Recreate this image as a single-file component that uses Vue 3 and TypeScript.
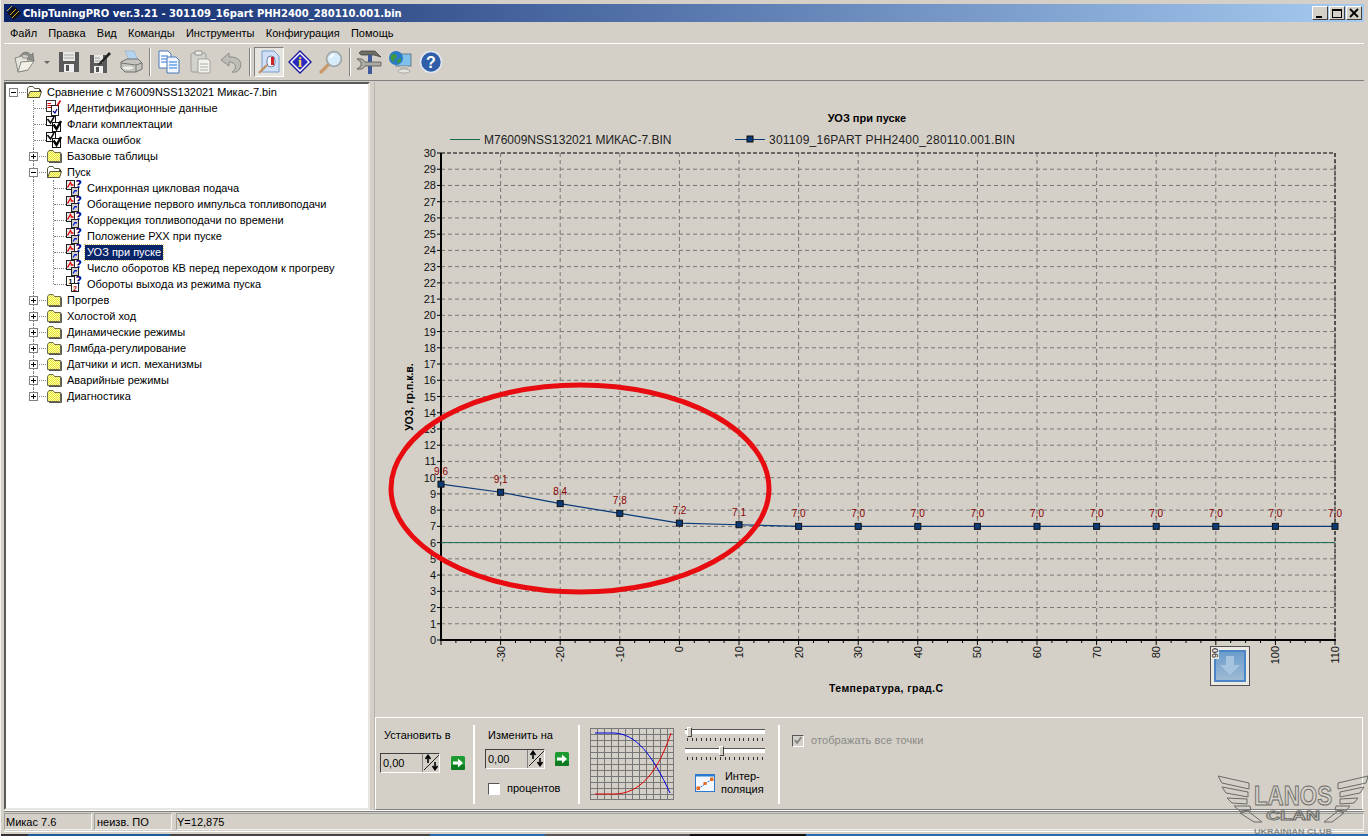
<script setup lang="ts">
interface TreeRow {
  label: string
  level: number
  icon: string
  expander?: '+' | '-'
  last?: boolean
  selected?: boolean
}

const menus = ['Файл', 'Правка', 'Вид', 'Команды', 'Инструменты', 'Конфигурация', 'Помощь']

const tools = ['open', 'caret', 'save', 'saveas', 'print', '|', 'copy', 'paste', 'undo', '|', 'compare', 'info', 'find', '|', 'tools', 'network', 'help']

const tree: TreeRow[] = [
  { label: 'Сравнение с M76009NSS132021 Микас-7.bin', level: 0, icon: 'folder-open', expander: '-' },
  { label: 'Идентификационные данные', level: 1, icon: 'doc' },
  { label: 'Флаги комплектации', level: 1, icon: 'check' },
  { label: 'Маска ошибок', level: 1, icon: 'check' },
  { label: 'Базовые таблицы', level: 1, icon: 'folder', expander: '+' },
  { label: 'Пуск', level: 1, icon: 'folder-open', expander: '-' },
  { label: 'Синхронная цикловая подача', level: 2, icon: 'chart' },
  { label: 'Обогащение первого импульса топливоподачи', level: 2, icon: 'chart' },
  { label: 'Коррекция топливоподачи по времени', level: 2, icon: 'chart' },
  { label: 'Положение РХХ при пуске', level: 2, icon: 'chart' },
  { label: 'УОЗ при пуске', level: 2, icon: 'chart', selected: true },
  { label: 'Число оборотов КВ перед переходом к прогреву', level: 2, icon: 'chart' },
  { label: 'Обороты выхода из режима пуска', level: 2, icon: 'num', last: true },
  { label: 'Прогрев', level: 1, icon: 'folder', expander: '+' },
  { label: 'Холостой ход', level: 1, icon: 'folder', expander: '+' },
  { label: 'Динамические режимы', level: 1, icon: 'folder', expander: '+' },
  { label: 'Лямбда-регулирование', level: 1, icon: 'folder', expander: '+' },
  { label: 'Датчики и исп. механизмы', level: 1, icon: 'folder', expander: '+' },
  { label: 'Аварийные режимы', level: 1, icon: 'folder', expander: '+' },
  { label: 'Диагностика', level: 1, icon: 'folder', expander: '+', last: true },
]

// chart is drawn in page coordinates, the svg viewBox starts at the panel corner
const left = 441
const right = 1335
const top = 153
const bottom = 640
const xAt = (t: number) => left + ((t + 40) / 150) * (right - left)
const yAt = (v: number) => bottom - (v / 30) * (bottom - top)

const yValues = Array.from({ length: 31 }, (_, i) => i)
const xValues = Array.from({ length: 15 }, (_, i) => -30 + i * 10)
const minorTicks = Array.from({ length: 61 }, (_, i) => left + (i * (right - left)) / 60)

const values = [9.6, 9.1, 8.4, 7.8, 7.2, 7.1, 7, 7, 7, 7, 7, 7, 7, 7, 7, 7]
const points = values.map((v, i) => ({
  x: xAt(-40 + i * 10),
  y: yAt(v),
  text: v.toFixed(1).replace('.', ','),
}))
const polyline = points.map((p) => `${p.x},${p.y}`).join(' ')

const gridCols = Array.from({ length: 11 }, (_, i) => i)
const gridRows = Array.from({ length: 11 }, (_, i) => i)
const sliderTicks = Array.from({ length: 17 }, (_, i) => i)
</script>

<template>
  <div class="window">
    <svg class="defs" width="0" height="0">
      <defs>
        <pattern id="dither" width="2" height="2" patternUnits="userSpaceOnUse">
          <rect width="2" height="2" fill="#ffff9c" />
          <rect width="1" height="1" fill="#e8e040" />
          <rect x="1" y="1" width="1" height="1" fill="#e8e040" />
        </pattern>
        <symbol id="folder" viewBox="0 0 16 16">
          <path d="M1.5 4.5 L3 2.5 H7 L8.5 4.5 H14.5 V13.5 H1.5 Z" fill="url(#dither)" stroke="#6b6b50" />
          <path d="M15.5 5.5 V14.5 H3" fill="none" stroke="#555" />
        </symbol>
        <symbol id="folder-open" viewBox="0 0 16 16">
          <path d="M1.5 4.5 L3 2.5 H7 L8.5 4.5 H13.5 V13.5 H1.5 Z" fill="#fff" stroke="#55553c" />
          <path d="M1.5 13.5 L4 7.5 H15.5 L13.5 13.5 Z" fill="url(#dither)" stroke="#55553c" />
          <path d="M14.5 5.5 V8" stroke="#222" />
        </symbol>
        <symbol id="doc" viewBox="0 0 16 16">
          <rect x="0.5" y="0.5" width="9" height="11" fill="#fff" stroke="#333" />
          <path d="M1.5 3.5 H5 M1.5 5.5 H5 M1.5 7.5 H5" stroke="#e00000" stroke-width="1.2" />
          <rect x="5.5" y="5.5" width="7" height="10" fill="#fff" stroke="#222" />
          <path d="M7 11 L9 13 L11 9" fill="none" stroke="#000090" stroke-width="1.2" />
          <path d="M11 6 L14.5 0.5" stroke="#c00000" stroke-width="1.5" />
        </symbol>
        <symbol id="check" viewBox="0 0 16 16">
          <rect x="0.5" y="0.5" width="9" height="9" fill="#fff" stroke="#111" />
          <rect x="6.5" y="6.5" width="8" height="9" fill="#fff" stroke="#111" />
          <path d="M1.5 3 L4.5 7 L8 1" fill="none" stroke="#111" stroke-width="1.6" />
          <path d="M7.5 8.5 L10.5 13 L15 5" fill="none" stroke="#000" stroke-width="2.4" />
        </symbol>
        <symbol id="chart" viewBox="0 0 16 16">
          <rect x="0.5" y="0.5" width="8" height="9" fill="#e8e8e8" stroke="#222" />
          <path d="M1.5 7.5 L4.5 2.5 L5.5 5 L7.5 5" fill="none" stroke="#e00000" stroke-width="1.3" />
          <rect x="5.5" y="7.5" width="7" height="8" fill="#d4d0c8" stroke="#222" />
          <path d="M7 13.5 L9 10.5 L11 11" fill="none" stroke="#0020d0" stroke-width="1.3" />
          <text x="9.6" y="8" class="svg-q">?</text>
        </symbol>
        <symbol id="num" viewBox="0 0 16 16">
          <rect x="0.5" y="0.5" width="8" height="9" fill="#fff" stroke="#222" />
          <text x="2.5" y="8" class="svg-num">1</text>
          <rect x="5.5" y="7.5" width="7" height="8" fill="#fff" stroke="#222" />
          <text x="7" y="15" class="svg-num svg-red">2</text>
          <text x="9.6" y="8" class="svg-q">?</text>
        </symbol>

        <symbol id="open" viewBox="0 0 24 24">
          <path d="M2 8 L9 6 L10 8 L15 8 V20 L5 22 Z" fill="#e4e2da" stroke="#8a8a82" />
          <path d="M5 22 L8 12 L21 11 L15 20 Z" fill="#f2f0e6" stroke="#8a8a82" />
          <path d="M7 6 C10 1 15 1 18 5 L20 3 L21 11 L14 9 L16 7 C14 4 11 4 7 6 Z" fill="#8c908a" stroke="#666" stroke-width="0.6" />
        </symbol>
        <symbol id="caret" viewBox="0 0 12 24">
          <path d="M3 11 H9 L6 14 Z" fill="#666" />
        </symbol>
        <symbol id="save" viewBox="0 0 24 24">
          <path d="M2 2 H22 V22 H2 Z" fill="#5a5a5a" />
          <rect x="6" y="2" width="12" height="9" fill="#e8e8e4" />
          <path d="M7 5 H17 M7 8 H17" stroke="#aaa" />
          <rect x="7" y="14" width="10" height="8" fill="#efefef" />
          <rect x="9" y="15" width="3" height="6" fill="#555" />
        </symbol>
        <symbol id="saveas" viewBox="0 0 24 24">
          <path d="M2 5 H19 V23 H2 Z" fill="#5a5a5a" />
          <rect x="6" y="5" width="9" height="8" fill="#e8e8e4" />
          <path d="M7 8 H12 M7 11 H14" stroke="#999" />
          <rect x="6" y="16" width="9" height="7" fill="#efefef" />
          <rect x="8" y="17" width="3" height="5" fill="#555" />
          <path d="M11 13 L21 2 L23 4 L13 14 L10 15 Z" fill="#222" />
        </symbol>
        <symbol id="print" viewBox="0 0 24 24">
          <path d="M6 1 H15 L19 10 H10 Z" fill="#b6d4f0" stroke="#8fa8c0" stroke-width="0.6" />
          <path d="M2 12 L8 9 H19 L23 13 V19 L17 22 H6 L2 18 Z" fill="#c4c4c0" stroke="#6e6e6a" />
          <path d="M2 13 L17 15 L23 13 M17 15 V22" fill="none" stroke="#77776f" />
          <ellipse cx="9" cy="18" rx="5" ry="1.4" fill="#efefeb" />
        </symbol>
        <symbol id="copy" viewBox="0 0 24 24">
          <path d="M2 1 H11 L14 4 V18 H2 Z" fill="#fff" stroke="#4a7ab8" />
          <path d="M4 6 H11 M4 9 H11 M4 12 H11" stroke="#2b78d8" />
          <path d="M10 7 H19 L22 10 V23 H10 Z" fill="#f2f6ff" stroke="#4a7ab8" />
          <path d="M12 12 H20 M12 15 H20 M12 18 H20" stroke="#1e78e0" />
        </symbol>
        <symbol id="paste" viewBox="0 0 24 24">
          <rect x="3" y="3" width="15" height="19" rx="2" fill="#d2d2cc" stroke="#9e9e98" />
          <rect x="7" y="1" width="7" height="4" rx="1" fill="#eee" stroke="#8c8c86" />
          <path d="M10 9 H20 L22 11 V23 H10 Z" fill="#f2f2ee" stroke="#a2a29c" />
          <path d="M12 14 H20 M12 17 H20 M12 20 H20" stroke="#aeaea8" />
        </symbol>
        <symbol id="undo" viewBox="0 0 24 24">
          <path d="M2 10 L10 3 V7 C19 6 24 12 21 18 C20 21 16 23 13 22 C18 20 18 12 10 12 V16 Z" fill="#bdbcb6" stroke="#8c8c86" />
        </symbol>
        <symbol id="compare" viewBox="0 0 24 24">
          <path d="M5 1 H17 L22 6 V22 H5 Z" fill="#cfe0f6" stroke="#7a9cc8" />
          <rect x="10" y="6" width="8" height="11" rx="4" fill="#f4f8fe" stroke="#6f7fa0" />
          <rect x="14" y="7" width="3" height="8" fill="#d02020" />
          <path d="M2 23 L10 15" stroke="#c09060" stroke-width="2.4" />
        </symbol>
        <symbol id="info" viewBox="0 0 24 24">
          <path d="M12 1 L23 12 L12 23 L1 12 Z" fill="#fff" stroke="#1a1a9a" stroke-width="1.4" />
          <path d="M12 4 L20 12 L12 20 L4 12 Z" fill="#2a2ac0" />
          <text x="12" y="17" class="svg-info">i</text>
        </symbol>
        <symbol id="find" viewBox="0 0 24 24">
          <path d="M2 22 L11 13" stroke="#c89a68" stroke-width="3.2" stroke-linecap="round" />
          <circle cx="15" cy="9" r="7.4" fill="#d6ecfa" stroke="#a2a8a8" stroke-width="1.8" />
          <path d="M11 8 C12 6 13 5 15 5" fill="none" stroke="#fff" stroke-width="1.6" />
        </symbol>
        <symbol id="tools" viewBox="0 0 26 26">
          <path d="M5 2 H19 L25 8 L18 6 H5 L3 4 Z" fill="#6e6e68" stroke="#3c3c38" stroke-width="0.7" />
          <rect x="12" y="6" width="4" height="19" fill="#3c5a9c" />
          <rect x="12" y="13" width="4" height="4" fill="#c04040" />
          <path d="M1 10 C6 9 8 11 9 13 H25 V17 H9 C8 19 6 21 1 20 L5 17 V13 Z" fill="#aaaaa2" stroke="#55554f" stroke-width="0.8" />
        </symbol>
        <symbol id="network" viewBox="0 0 24 24">
          <rect x="8" y="4" width="15" height="12" fill="#7ec2ec" stroke="#6e7e88" />
          <path d="M12 16 V19 H20 V16 Z" fill="#c0c0ba" />
          <ellipse cx="16" cy="21" rx="6" ry="2" fill="#e4e4de" stroke="#888" stroke-width="0.6" />
          <circle cx="8" cy="8" r="7" fill="#2a7ac8" />
          <path d="M3 5 C6 3 8 4 9 6 C8 9 5 9 6 12 C4 12 2 9 3 5 Z M9 10 L13 8 L13 11 L10 14 Z" fill="#3c9a3c" />
        </symbol>
        <symbol id="help" viewBox="0 0 24 24">
          <circle cx="12" cy="12" r="10.5" fill="#2f5ea8" stroke="#dfe6f2" stroke-width="1.6" />
          <text x="12" y="18" class="svg-help">?</text>
        </symbol>
        <symbol id="go" viewBox="0 0 14 14">
          <rect width="14" height="14" rx="1.5" fill="#1c9a30" />
          <rect y="9" width="14" height="5" rx="1.5" fill="#0e7a22" />
          <path d="M2 5.5 H7 V2.5 L12 7 L7 11.5 V8.5 H2 Z" fill="#fff" />
        </symbol>
        <symbol id="spin" viewBox="0 0 17 17">
          <path d="M1 16 L16 1" stroke="#222" />
          <path d="M5 9 V2 M2.5 5 L5 1.5 L7.5 5" fill="none" stroke="#000" stroke-width="1.6" />
          <path d="M12 8 V15 M9.5 12 L12 15.5 L14.5 12" fill="none" stroke="#000" stroke-width="1.6" />
        </symbol>
      </defs>
    </svg>

    <header class="titlebar">
      <svg class="app-icon" viewBox="0 0 16 16" width="16" height="16">
        <path d="M1 8 L8 1 L15 8 L8 15 Z" fill="#111" />
        <path d="M1 6 L6 1 M4 10 L10 4 M6 13 L13 6" stroke="#d8b020" />
      </svg>
      <span class="title-text">ChipTuningPRO ver.3.21 - 301109_16part PHH2400_280110.001.bin</span>
      <div class="win-buttons">
        <span class="win-btn"><i class="glyph-min"></i></span>
        <span class="win-btn"><i class="glyph-max"></i></span>
        <span class="win-btn win-close">
          <svg viewBox="0 0 10 10" width="10" height="10"><path d="M1 1 L9 9 M9 1 L1 9" stroke="#000" stroke-width="1.8" /></svg>
        </span>
      </div>
    </header>

    <nav class="menubar">
      <span v-for="m in menus" :key="m" class="menu-item">{{ m }}</span>
    </nav>

    <div class="toolbar">
      <template v-for="(t, i) in tools" :key="i">
        <span v-if="t === '|'" class="tool-sep"></span>
        <span v-else-if="t === 'caret'" class="tool-caret">
          <svg width="12" height="24"><use href="#caret" /></svg>
        </span>
        <span v-else class="tool-btn" :class="{ active: t === 'compare' }">
          <svg :width="t === 'tools' ? 26 : 24" :height="t === 'tools' ? 26 : 24"><use :href="'#' + t" /></svg>
        </span>
      </template>
    </div>

    <main class="body">
      <aside class="tree">
        <div v-for="row in tree" :key="row.label" class="tree-row">
          <span v-if="row.level > 0" class="cell"></span>
          <span v-if="row.level === 2" class="cell pass"></span>
          <span class="cell" :class="{ branch: row.level > 0, 'branch-root': row.level === 0, end: row.last }">
            <span v-if="row.expander" class="expander">
              <i class="h"></i><i v-if="row.expander === '+'" class="v"></i>
            </span>
          </span>
          <svg class="tree-icon" width="16" height="16"><use :href="'#' + row.icon" /></svg>
          <span class="tree-label" :class="{ selected: row.selected }">{{ row.label }}</span>
        </div>
      </aside>

      <section class="right">
        <div class="chart-wrap">
          <svg class="chart" width="990" height="635" viewBox="375 82 990 635">
            <text x="867" y="122" class="chart-title">УОЗ при пуске</text>

            <line x1="450" x2="480" y1="139.5" y2="139.5" stroke="#1a6a50" />
            <text x="484" y="144" class="legend">M76009NSS132021 МИКАС-7.BIN</text>
            <line x1="735" x2="765" y1="139.5" y2="139.5" stroke="#0a3a78" />
            <rect x="747" y="136" width="6" height="6" fill="#0a3a78" stroke="#111" />
            <text x="769" y="144" textLength="246" class="legend">301109_16PART PHH2400_280110.001.BIN</text>

            <g stroke="#777" stroke-dasharray="4 3">
              <line v-for="v in yValues.slice(1, 30)" :key="v" :x1="left" :x2="right" :y1="yAt(v)" :y2="yAt(v)" />
              <line v-for="t in xValues" :key="t" :x1="xAt(t)" :x2="xAt(t)" :y1="top" :y2="bottom" />
            </g>
            <g stroke="#000">
              <line :x1="left" :x2="right" :y1="top" :y2="top" stroke-dasharray="4 2" />
              <line :x1="right" :x2="right" :y1="top" :y2="bottom" stroke-dasharray="4 2" />
              <line :x1="left" :x2="left" :y1="top" :y2="bottom + 1" stroke-width="2" />
              <line :x1="left" :x2="right + 1" :y1="bottom" :y2="bottom" stroke-width="2" />
              <line v-for="v in yValues" :key="v" :x1="left - 4" :x2="left" :y1="yAt(v)" :y2="yAt(v)" />
              <line v-for="(x, i) in minorTicks" :key="i" :x1="x" :x2="x" :y1="bottom" :y2="bottom + (i % 4 === 0 ? 5 : 3)" />
            </g>

            <text v-for="v in yValues" :key="v" x="436" :y="yAt(v) + 4" class="y-label">{{ v }}</text>
            <text
              v-for="t in xValues.filter((x) => x !== 90)"
              :key="t"
              class="x-label"
              :transform="`translate(${xAt(t) + 4} 646) rotate(-90)`"
            >{{ t }}</text>

            <text class="axis-title" transform="translate(413 397) rotate(-90)">УОЗ, гр.п.к.в.</text>
            <text x="886" y="692" class="axis-title" textLength="114">Температура, град.С</text>

            <line :x1="left" :x2="right" :y1="yAt(6)" :y2="yAt(6)" stroke="#1a6a50" />
            <polyline :points="polyline" fill="none" stroke="#0a3a78" stroke-width="1.2" />
            <g v-for="p in points" :key="p.x">
              <rect :x="p.x - 3" :y="p.y - 3" width="6" height="6" fill="#0a3a78" stroke="#111" />
              <text :x="p.x" :y="p.y - 9" class="point-label">{{ p.text }}</text>
            </g>

            <ellipse cx="580" cy="488.5" rx="189" ry="103.5" fill="none" stroke="#e80c10" stroke-width="5" />
          </svg>

          <button class="down-btn">
            <span class="hidden-tick"><span>90</span></span>
            <span class="down-inner">
              <svg width="24" height="22" viewBox="0 0 24 22"><path d="M8 1 H16 V10 H22 L12 20 L2 10 H8 Z" fill="#a6c4e0" /></svg>
            </span>
          </button>
        </div>

        <div class="controls">
          <div class="group group-set">
            <span class="group-label">Установить в</span>
            <div class="input-line">
              <span class="spin-input"><span class="spin-value">0,00</span><span class="spin-btn"><svg width="17" height="17"><use href="#spin" /></svg></span></span>
              <svg class="go-icon" width="14" height="14"><use href="#go" /></svg>
            </div>
          </div>
          <div class="group group-change">
            <span class="group-label">Изменить на</span>
            <div class="input-line">
              <span class="spin-input"><span class="spin-value">0,00</span><span class="spin-btn"><svg width="17" height="17"><use href="#spin" /></svg></span></span>
              <svg class="go-icon" width="14" height="14"><use href="#go" /></svg>
            </div>
            <label class="check-line"><span class="checkbox"></span>процентов</label>
          </div>
          <div class="group group-interp">
            <svg class="curve" width="84" height="72" viewBox="0 0 84 72">
              <rect x="0.5" y="0.5" width="83" height="71" fill="#d4d0c8" stroke="#777" />
              <g stroke="#777">
                <line v-for="c in gridCols" :key="c" :x1="7 * c + 7.5" :x2="7 * c + 7.5" y1="0" y2="72" />
                <line v-for="r in gridRows" :key="r" x1="0" x2="84" :y1="6 * r + 6.5" :y2="6 * r + 6.5" />
              </g>
              <path d="M5 5 H24 C46 6 62 26 80 65" fill="none" stroke="#0000e0" />
              <path d="M5 66 H24 C50 66 68 44 81 5" fill="none" stroke="#e00000" />
            </svg>
            <div class="slider-col">
              <div class="slider"><span class="track"></span><span class="thumb thumb-a"></span></div>
              <div class="ticks"><i v-for="n in sliderTicks" :key="n"></i></div>
              <div class="slider"><span class="track"></span><span class="thumb thumb-b"></span></div>
              <div class="ticks"><i v-for="n in sliderTicks" :key="n"></i></div>
              <div class="interp-btn">
                <svg width="20" height="18" viewBox="0 0 20 18">
                  <rect x="0.5" y="0.5" width="19" height="17" fill="#f4f8fe" stroke="#2a7ad0" />
                  <rect width="20" height="2.5" fill="#2a7ad0" />
                  <path d="M3 15 L17 5" stroke="#2a6ab0" stroke-dasharray="2 1" />
                  <rect x="1.5" y="12.5" width="3.5" height="3.5" fill="#e86a20" />
                  <rect x="8.5" y="8" width="3" height="3" fill="#e86a20" />
                  <rect x="15" y="3.5" width="3.5" height="3.5" fill="#e86a20" />
                </svg>
                <span class="interp-text">Интер-<br />поляция</span>
              </div>
            </div>
          </div>
          <div class="group group-all">
            <label class="check-line disabled">
              <span class="checkbox checked">
                <svg width="11" height="11" viewBox="0 0 11 11"><path d="M2 5 L4.5 8 L9 2" fill="none" stroke="#808080" stroke-width="2" /></svg>
              </span>отображать все точки
            </label>
          </div>
        </div>
      </section>
    </main>

    <footer class="statusbar">
      <span class="status s1">Микас 7.6</span>
      <span class="status s2">неизв. ПО</span>
      <span class="status s3">Y=12,875</span>
    </footer>

    <div class="desktop-strip"></div>

    <svg class="watermark" width="150" height="66" viewBox="1218 770 150 66">
      <g fill="none" stroke="#6a6a66">
        <path d="M1218 776 L1249 783 V789 L1222 783 Z" />
        <path d="M1222 787 L1248 792 V797 L1226 793 Z" />
        <path d="M1227 798 L1247 799 V804 L1232 803 Z" />
        <path d="M1234 806 L1250 806 L1251 810 L1240 811 Z" />
        <path d="M1240 813 L1254 822 H1262 L1248 811 Z" />
        <path d="M1368 776 L1338 783 V789 L1366 783 Z" />
        <path d="M1364 787 L1340 792 V797 L1360 793 Z" />
        <path d="M1358 798 L1340 799 V804 L1354 803 Z" />
        <path d="M1350 806 L1336 806 L1335 810 L1346 811 Z" />
        <path d="M1344 813 L1332 822 H1324 L1338 811 Z" />
      </g>
      <text x="1254" y="805" textLength="78" lengthAdjust="spacingAndGlyphs" class="wm-big">LANOS</text>
      <text x="1266" y="820" textLength="54" lengthAdjust="spacingAndGlyphs" class="wm-mid">CLAN</text>
      <text x="1254" y="834" textLength="78" lengthAdjust="spacingAndGlyphs" class="wm-small">UKRAINIAN CLUB</text>
    </svg>
  </div>
</template>

<style scoped>
.window {
  position: relative;
  box-sizing: border-box;
  width: 1368px;
  height: 836px;
  display: flex;
  flex-direction: column;
  padding: 4px 4px 0 3px;
  background: #d4d0c8;
  border-left: 1px solid #f4f3ef;
  font-family: 'Liberation Sans', Arial, sans-serif;
  font-size: 11px;
  color: #000;
  overflow: hidden;
}

.defs {
  position: absolute;
}

.svg-q {
  font: 900 11px 'DejaVu Sans', sans-serif;
  fill: #000080;
}

.svg-num {
  font: bold 7px 'Liberation Sans', sans-serif;
  fill: #000;
}

.svg-red {
  fill: #b00000;
}

.svg-info {
  font: bold 14px 'Liberation Serif', serif;
  fill: #ffe040;
  text-anchor: middle;
}

.svg-help {
  font: bold 16px 'Liberation Sans', sans-serif;
  fill: #fff;
  text-anchor: middle;
}

.titlebar {
  flex: none;
  height: 18px;
  display: flex;
  align-items: center;
  padding-left: 2px;
  background: linear-gradient(90deg, #0a246a 0%, #a6caf0 100%);
  color: #fff;
}

.app-icon {
  flex: none;
  margin-right: 1px;
}

.title-text {
  font-family: 'DejaVu Sans', sans-serif;
  font-weight: 700;
  font-size: 10px;
}

.win-buttons {
  margin-left: auto;
  display: flex;
  margin-right: 2px;
}

.win-btn {
  box-sizing: border-box;
  width: 16px;
  height: 14px;
  margin-left: 1px;
  display: flex;
  align-items: center;
  justify-content: center;
  background: #d4d0c8;
  border: 1px solid;
  border-color: #fff #404040 #404040 #fff;
}

.glyph-min {
  width: 6px;
  height: 2px;
  margin-top: 7px;
  margin-right: 2px;
  background: #000;
}

.glyph-max {
  box-sizing: border-box;
  width: 10px;
  height: 9px;
  border: 1px solid #000;
  border-top-width: 2px;
}

.menubar {
  flex: none;
  height: 21px;
  display: flex;
  align-items: center;
  gap: 11.3px;
  padding-left: 6px;
}

.toolbar {
  flex: none;
  box-sizing: border-box;
  height: 38px;
  display: flex;
  align-items: center;
  gap: 1px;
  padding-left: 6px;
  border-top: 1px solid #fff;
  border-bottom: 1px solid #808080;
}

.tool-btn {
  box-sizing: border-box;
  flex: none;
  width: 30px;
  height: 30px;
  display: flex;
  align-items: center;
  justify-content: center;
}

.tool-btn.active {
  background: #e6e4df;
  border: 1px solid;
  border-color: #808080 #fff #fff #808080;
}

.tool-caret {
  flex: none;
  width: 12px;
  height: 24px;
}

.tool-sep {
  flex: none;
  width: 2px;
  height: 28px;
  margin: 0 2px;
  border-left: 1px solid #808080;
  border-right: 1px solid #fff;
  box-sizing: border-box;
}

.body {
  flex: 1;
  min-height: 0;
  display: flex;
  margin-top: 1px;
  border-bottom: 1px solid #fff;
}

.tree {
  box-sizing: border-box;
  flex: none;
  width: 366px;
  background: #fff;
  border: 2px solid;
  border-color: #5a5a5a #e8e6e0 #e8e6e0 #5a5a5a;
}

.tree-row {
  display: flex;
  align-items: center;
  height: 16px;
  white-space: nowrap;
}

.cell {
  position: relative;
  flex: none;
  width: 20px;
  height: 16px;
}

.pass::before,
.branch::before {
  content: '';
  position: absolute;
  left: 7px;
  top: 0;
  bottom: 0;
  border-left: 1px dotted #808080;
}

.branch.end::before {
  bottom: 8px;
}

.branch::after,
.branch-root::after {
  content: '';
  position: absolute;
  left: 8px;
  right: 0;
  top: 8px;
  border-top: 1px dotted #808080;
}

.expander {
  position: absolute;
  z-index: 1;
  box-sizing: border-box;
  left: 3px;
  top: 4px;
  width: 9px;
  height: 9px;
  background: #fff;
  border: 1px solid #808080;
}

.expander .h {
  position: absolute;
  left: 1px;
  top: 3px;
  width: 5px;
  height: 1px;
  background: #000;
}

.expander .v {
  position: absolute;
  left: 3px;
  top: 1px;
  width: 1px;
  height: 5px;
  background: #000;
}

.tree-icon {
  flex: none;
}

.tree-label {
  margin-left: 3px;
  padding: 1px 2px;
  line-height: 13px;
}

.tree-label.selected {
  background: #0a246a;
  color: #fff;
  outline: 1px dotted #d8c060;
}

.right {
  flex: 1;
  min-width: 0;
  display: flex;
  flex-direction: column;
  margin-left: 4px;
  border-left: 1px solid #b8b4ac;
}

.chart-wrap {
  position: relative;
  flex: none;
  height: 635px;
}

.chart {
  display: block;
}

.chart text {
  font-family: 'Liberation Sans', Arial, sans-serif;
}

.chart-title {
  font-size: 11px;
  font-weight: 700;
  text-anchor: middle;
}

.legend {
  font-size: 12px;
  fill: #222;
}

.y-label {
  font-size: 11px;
  text-anchor: end;
  fill: #111;
}

.x-label {
  font-size: 11px;
  text-anchor: end;
  fill: #111;
}

.axis-title {
  font-size: 10.5px;
  font-weight: 700;
  text-anchor: middle;
}

.point-label {
  font-size: 10px;
  text-anchor: middle;
  fill: #8a0000;
}

.down-btn {
  position: absolute;
  left: 835px;
  top: 564px;
  box-sizing: border-box;
  width: 40px;
  height: 40px;
  padding: 0;
  display: flex;
  align-items: center;
  justify-content: center;
  background: #ece9e2;
  border: 1px solid #505050;
}

.hidden-tick {
  position: absolute;
  left: 0;
  top: 0;
  width: 8px;
  height: 12px;
  overflow: hidden;
  background: #ece9e2;
}

.hidden-tick span {
  display: block;
  font-size: 9px;
  line-height: 8px;
  transform: rotate(-90deg) translate(-3px, 0);
  color: #111;
}

.down-inner {
  box-sizing: border-box;
  width: 32px;
  height: 32px;
  display: flex;
  align-items: center;
  justify-content: center;
  background: linear-gradient(180deg, #6c9ccc 0%, #9dbad4 100%);
  border: 2px solid #4a86c8;
}

.controls {
  box-sizing: border-box;
  flex: none;
  height: 93px;
  display: flex;
  margin-right: 1px;
  padding: 7px 0 5px;
  border: 1px solid;
  border-color: #fff #fff #808080 #fff;
}

.group {
  box-sizing: border-box;
  flex: none;
  display: flex;
  border-right: 2px solid;
  border-image: linear-gradient(90deg, #9a9a94 50%, #fff 50%) 1;
}

.group-set {
  width: 99px;
  flex-direction: column;
  padding: 4px 0 0 8px;
}

.group-change {
  width: 105px;
  flex-direction: column;
  padding: 4px 0 0 13px;
}

.group-interp {
  width: 200px;
  padding-left: 10px;
  gap: 11px;
  align-items: flex-start;
}

.group-all {
  flex: 1;
  border: none;
  align-items: flex-start;
  padding: 9px 0 0 12px;
}

.group-label {
  line-height: 13px;
}

.input-line {
  display: flex;
  align-items: center;
}

.group-set .input-line {
  gap: 11px;
  margin: 11px 0 0 -4px;
}

.group-change .input-line {
  gap: 10px;
  margin: 7px 0 0 -3px;
}

.spin-input {
  box-sizing: border-box;
  width: 60px;
  height: 20px;
  display: flex;
  align-items: center;
  justify-content: space-between;
  border: 1px solid;
  border-color: #404040 #fff #fff #404040;
}

.spin-value {
  padding-left: 2px;
}

.spin-btn {
  box-sizing: border-box;
  width: 17px;
  height: 18px;
  display: block;
  background: #d4d0c8;
  border-left: 1px solid #808080;
}

.check-line {
  display: flex;
  align-items: center;
  gap: 7px;
  line-height: 13px;
}

.group-change .check-line {
  margin-top: 13px;
}

.check-line.disabled {
  color: #8a8a86;
  letter-spacing: 0.1px;
}

.checkbox {
  box-sizing: border-box;
  flex: none;
  width: 12px;
  height: 12px;
  background: #fff;
  border: 1px solid;
  border-color: #555 #fff #fff #555;
}

.checkbox.checked {
  display: flex;
  align-items: center;
  justify-content: center;
  background: #d4d0c8;
}

.curve {
  flex: none;
  margin-top: 3px;
}

.slider-col {
  width: 80px;
  display: flex;
  flex-direction: column;
}

.slider {
  position: relative;
  height: 10px;
  margin-top: 2px;
}

.track {
  position: absolute;
  left: 0;
  right: 0;
  top: 2px;
  height: 4px;
  background: #fff;
  border-top: 1px solid #555;
}

.thumb {
  box-sizing: border-box;
  position: absolute;
  top: 0;
  width: 5px;
  height: 10px;
  background: #d4d0c8;
  border: 1px solid;
  border-color: #fff #444 #444 #fff;
}

.thumb-a {
  left: 2px;
}

.thumb-b {
  left: 34px;
}

.ticks {
  height: 5px;
  margin: 1px 0;
  display: flex;
  justify-content: space-between;
  padding: 0 2px;
}

.ticks i {
  width: 1px;
  height: 3px;
  background: #333;
}

.interp-btn {
  display: flex;
  align-items: center;
  gap: 6px;
  margin: 7px 0 0 10px;
}

.interp-text {
  text-align: center;
  line-height: 13px;
}

.statusbar {
  flex: none;
  height: 21px;
  box-sizing: border-box;
  display: flex;
  gap: 2px;
  border-top: 1px solid #808080;
  border-bottom: 1px solid #fff;
}

.status {
  box-sizing: border-box;
  display: flex;
  align-items: center;
  padding-left: 1px;
  border: 1px solid;
  border-color: #a0a09a #f4f3ef #f4f3ef #a0a09a;
  margin: 1px 0;
}

.s1 {
  width: 88px;
}

.s2 {
  width: 78px;
  padding-left: 2px;
}

.s3 {
  flex: 1;
  margin-left: 2px;
  padding-left: 0;
}

.desktop-strip {
  flex: none;
  height: 2px;
  margin: 2px -4px 0 -4px;
  background: linear-gradient(
    90deg,
    #333 0 28px,
    #1c5a9a 28px 170px,
    #444 170px 430px,
    #2a6ab0 430px 545px,
    #555 545px 690px,
    #111 690px 806px,
    #2a6ab0 806px 1368px
  );
}

.watermark {
  position: absolute;
  right: 0;
  bottom: 0;
}

.wm-big {
  font: 700 27px 'Liberation Sans', sans-serif;
  fill: transparent;
  stroke: #6a6a66;
  stroke-width: 1;
}

.wm-mid {
  font: 700 12px 'Liberation Sans', sans-serif;
  fill: transparent;
  stroke: #6a6a66;
  stroke-width: 0.8;
}

.wm-small {
  font: 700 8px 'Liberation Sans', sans-serif;
  fill: #8a8a84;
}
</style>
